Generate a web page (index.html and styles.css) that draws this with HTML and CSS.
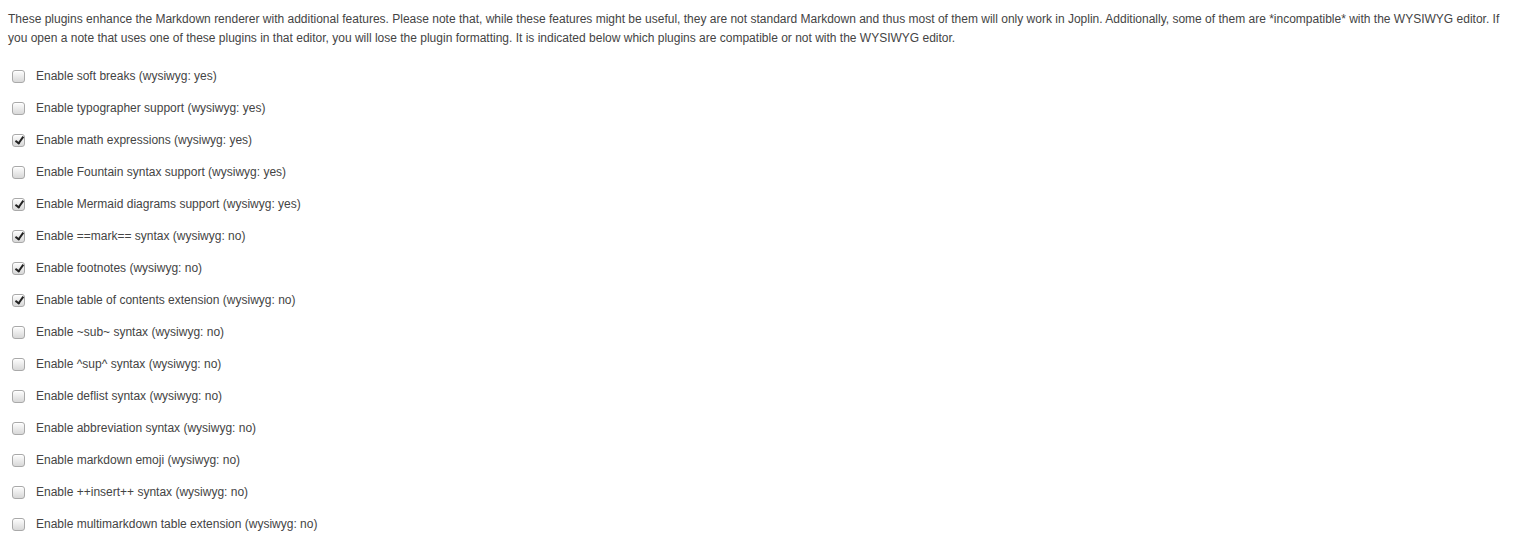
FILE: index.html
```html
<!DOCTYPE html>
<html lang="en">
<head>
<meta charset="UTF-8">
<title>Markdown plugins</title>
<link rel="stylesheet" href="styles.css">
</head>
<body>
<div class="section">
  <p class="intro">These plugins enhance the Markdown renderer with additional features. Please note that, while these features might be useful, they are not standard Markdown and thus most of them will only work in Joplin. Additionally, some of them are *incompatible* with the WYSIWYG editor. If you open a note that uses one of these plugins in that editor, you will lose the plugin formatting. It is indicated below which plugins are compatible or not with the WYSIWYG editor.</p>

  <label class="option"><input type="checkbox"> <span>Enable soft breaks (wysiwyg: yes)</span></label>
  <label class="option"><input type="checkbox"> <span>Enable typographer support (wysiwyg: yes)</span></label>
  <label class="option"><input type="checkbox" checked> <span>Enable math expressions (wysiwyg: yes)</span></label>
  <label class="option"><input type="checkbox"> <span>Enable Fountain syntax support (wysiwyg: yes)</span></label>
  <label class="option"><input type="checkbox" checked> <span>Enable Mermaid diagrams support (wysiwyg: yes)</span></label>
  <label class="option"><input type="checkbox" checked> <span>Enable ==mark== syntax (wysiwyg: no)</span></label>
  <label class="option"><input type="checkbox" checked> <span>Enable footnotes (wysiwyg: no)</span></label>
  <label class="option"><input type="checkbox" checked> <span>Enable table of contents extension (wysiwyg: no)</span></label>
  <label class="option"><input type="checkbox"> <span>Enable ~sub~ syntax (wysiwyg: no)</span></label>
  <label class="option"><input type="checkbox"> <span>Enable ^sup^ syntax (wysiwyg: no)</span></label>
  <label class="option"><input type="checkbox"> <span>Enable deflist syntax (wysiwyg: no)</span></label>
  <label class="option"><input type="checkbox"> <span>Enable abbreviation syntax (wysiwyg: no)</span></label>
  <label class="option"><input type="checkbox"> <span>Enable markdown emoji (wysiwyg: no)</span></label>
  <label class="option"><input type="checkbox"> <span>Enable ++insert++ syntax (wysiwyg: no)</span></label>
  <label class="option"><input type="checkbox"> <span>Enable multimarkdown table extension (wysiwyg: no)</span></label>
</div>
</body>
</html>
```

FILE: styles.css
```css
body {
  margin: 0;
  font-family: "Liberation Sans", Arial, sans-serif;
  font-size: 12px;
  color: #444;
  background: #fff;
}

.section {
  padding: 10px 8px;
}

.intro {
  margin: 0 0 12px 0;
  line-height: 19px;
}

.option {
  display: flex;
  align-items: center;
  height: 32px;
  padding-left: 4px;
}

.option span {
  margin-left: 11px;
}

input[type="checkbox"] {
  -webkit-appearance: none;
  appearance: none;
  position: relative;
  width: 13px;
  height: 13px;
  margin: 0;
  border: 1px solid #a9a9a9;
  border-radius: 3px;
  background: linear-gradient(#fdfdfd, #d8d8d8);
  box-shadow: inset 0 1px 0 #fff;
}

input[type="checkbox"]:checked::after {
  content: "";
  position: absolute;
  left: 4px;
  top: 0px;
  width: 3px;
  height: 7px;
  border: solid #222;
  border-width: 0 2px 2px 0;
  transform: rotate(35deg);
}
```
